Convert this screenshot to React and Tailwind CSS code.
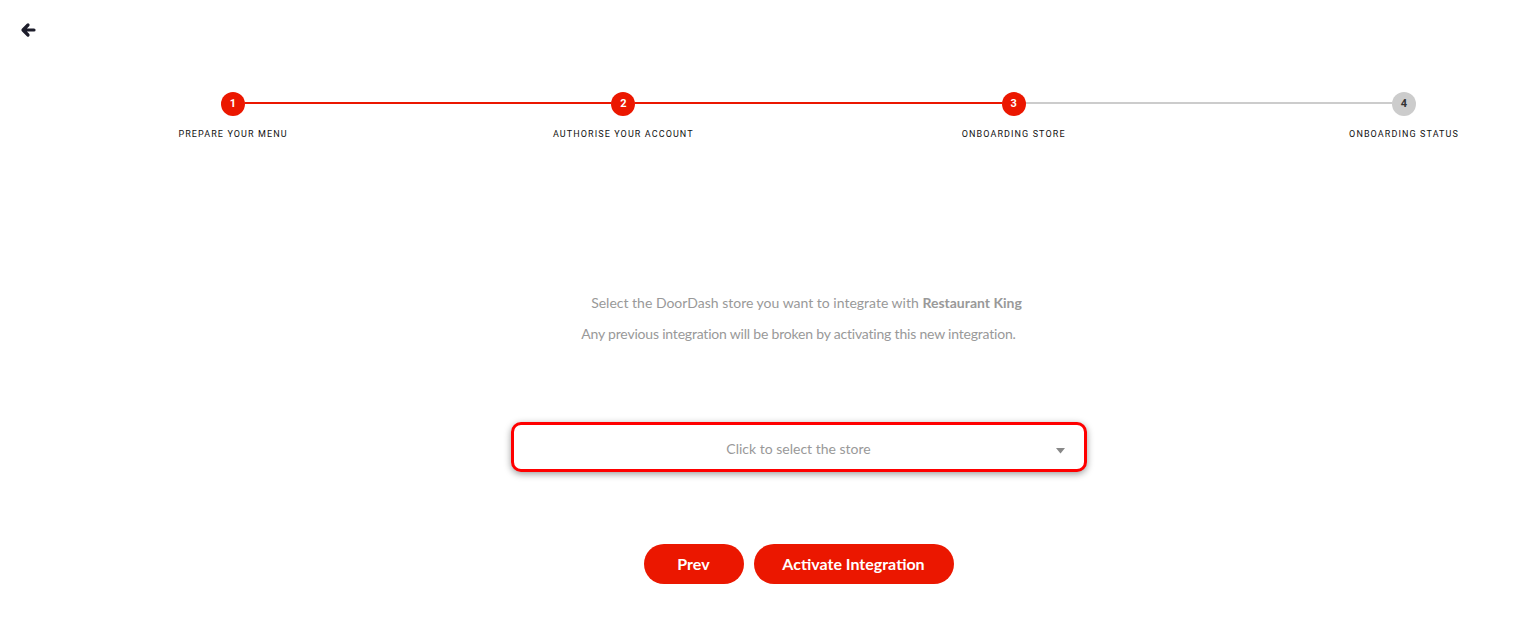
import React from "react";

const steps = [
  { n: 1, label: "PREPARE YOUR MENU", done: true },
  { n: 2, label: "AUTHORISE YOUR ACCOUNT", done: true },
  { n: 3, label: "ONBOARDING STORE", done: true },
  { n: 4, label: "ONBOARDING STATUS", done: false },
];

function Step({ s }) {
  return (
    <div className="flex w-6 flex-col items-center">
      <div
        className={
          "flex h-6 w-6 items-center justify-center rounded-full text-[11px] font-bold " +
          (s.done ? "bg-[#eb1700] text-white" : "bg-[#cccccc] text-[#333]")
        }
        style={{ fontFamily: "Roboto, Arial, sans-serif" }}
      >
        {s.n}
      </div>
      <div
        className="mt-[12px] whitespace-nowrap text-[9px] font-normal tracking-[1.1px] text-[#111111]"
        style={{ fontFamily: "Roboto, Arial, sans-serif" }}
      >
        {s.label}
      </div>
    </div>
  );
}

export default function App() {
  return (
    <div
      className="min-h-screen w-full bg-white"
      style={{ fontFamily: "Lato, 'Open Sans', Arial, sans-serif" }}
    >
      <div className="pl-[20px] pt-[22px]">
        <svg width="16" height="16" viewBox="0 0 16 16" fill="none">
          <path
            d="M14 8H3.5M8 3L3 8l5 5"
            stroke="#1d1d2b"
            strokeWidth="3.2"
            strokeLinecap="round"
            strokeLinejoin="round"
          />
        </svg>
      </div>

      <div className="ml-[221px] mt-[54px] flex w-[1195px] items-start">
        <Step s={steps[0]} />
        <div className="mt-[10px] h-[2px] flex-1 bg-[#eb1700]" />
        <Step s={steps[1]} />
        <div className="mt-[10px] h-[2px] flex-1 bg-[#eb1700]" />
        <Step s={steps[2]} />
        <div className="mt-[10px] h-[2px] flex-1 bg-[#cccccc]" />
        <Step s={steps[3]} />
      </div>

      <div className="pl-[70px]">
        <div className="mt-[150px] flex flex-col items-center text-[14px] text-[#999999]">
          <p className="ml-[16px]">
            Select the DoorDash store you want to integrate with{" "}
            <span className="font-bold">Restaurant King</span>
          </p>
          <p className="mt-[10px] tracking-[-0.2px]">
            Any previous integration will be broken by activating this new integration.
          </p>
        </div>

        <div className="mt-[78px] flex justify-center">
          <div className="relative flex h-[50px] w-[576px] items-center justify-center rounded-[10px] border-[3px] border-[#ff0000] bg-white shadow-[0_2px_7px_rgba(0,0,0,0.4)]">
            <span className="mt-[4px] text-[14px] text-[#999999]">Click to select the store</span>
            <svg
              className="absolute right-[19px] top-[23px]"
              width="9"
              height="6"
              viewBox="0 0 9 6"
              fill="#888888"
            >
              <path d="M0 0h9L4.5 5.5z" />
            </svg>
          </div>
        </div>

        <div className="mt-[72px] flex justify-center gap-[10px]">
          <button className="h-[40px] w-[100px] rounded-full bg-[#eb1700] text-[16px] font-bold text-white">
            Prev
          </button>
          <button className="h-[40px] w-[200px] rounded-full bg-[#eb1700] text-[16px] font-bold text-white">
            Activate Integration
          </button>
        </div>
      </div>
    </div>
  );
}
